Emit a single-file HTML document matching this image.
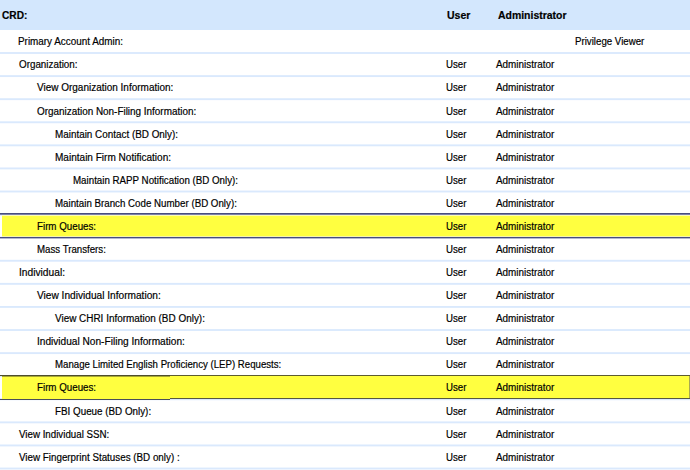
<!DOCTYPE html>
<html><head><meta charset="utf-8"><title>CRD Privileges</title>
<style>
html,body{margin:0;padding:0;background:#fff;}
body{width:690px;height:470px;position:relative;overflow:hidden;font-family:"Liberation Sans",sans-serif;font-size:10px;color:#000;}
.hd{position:absolute;left:0;top:0;width:690px;height:30px;background:#d3e7fd;}
.t{position:absolute;white-space:nowrap;line-height:12px;height:12px;transform-origin:0 0;-webkit-text-stroke:0.18px #000;}
.b{font-weight:bold;font-size:10.5px;}
.sep{position:absolute;left:0;width:690px;height:1px;}
.hl{position:absolute;left:0;width:690px;}
</style></head><body>
<div class="hd"></div>

<span class="t b" id="h0" style="left:1.81px;top:9px;transform:scaleX(0.9659)">CRD:</span>
<span class="t b" id="h1" style="left:446.60px;top:9px;transform:scaleX(1.0022)">User</span>
<span class="t b" id="h2" style="left:497.90px;top:9px;transform:scaleX(0.9949)">Administrator</span>
<div class="sep" style="top:52px;background:rgb(220,234,253)"></div>
<div class="sep" style="top:53px;background:rgb(220,234,253)"></div>
<div class="sep" style="top:75px;background:rgb(223,236,253)"></div>
<div class="sep" style="top:76px;background:rgb(218,233,253)"></div>
<div class="sep" style="top:77px;background:rgb(254,254,255)"></div>
<div class="sep" style="top:98px;background:rgb(226,238,253)"></div>
<div class="sep" style="top:99px;background:rgb(218,233,253)"></div>
<div class="sep" style="top:100px;background:rgb(251,252,255)"></div>
<div class="sep" style="top:121px;background:rgb(229,240,254)"></div>
<div class="sep" style="top:122px;background:rgb(218,233,253)"></div>
<div class="sep" style="top:123px;background:rgb(247,250,255)"></div>
<div class="sep" style="top:144px;background:rgb(232,242,254)"></div>
<div class="sep" style="top:145px;background:rgb(218,233,253)"></div>
<div class="sep" style="top:146px;background:rgb(244,249,254)"></div>
<div class="sep" style="top:167px;background:rgb(236,243,254)"></div>
<div class="sep" style="top:168px;background:rgb(218,233,253)"></div>
<div class="sep" style="top:169px;background:rgb(241,247,254)"></div>
<div class="sep" style="top:190px;background:rgb(239,245,254)"></div>
<div class="sep" style="top:191px;background:rgb(218,233,253)"></div>
<div class="sep" style="top:192px;background:rgb(238,245,254)"></div>
<div class="sep" style="top:213px;background:rgb(242,247,254)"></div>
<div class="sep" style="top:214px;background:rgb(218,233,253)"></div>
<div class="sep" style="top:215px;background:rgb(235,243,254)"></div>
<div class="sep" style="top:236px;background:rgb(245,249,254)"></div>
<div class="sep" style="top:237px;background:rgb(218,233,253)"></div>
<div class="sep" style="top:238px;background:rgb(232,241,254)"></div>
<div class="sep" style="top:259px;background:rgb(248,251,255)"></div>
<div class="sep" style="top:260px;background:rgb(218,233,253)"></div>
<div class="sep" style="top:261px;background:rgb(229,239,254)"></div>
<div class="sep" style="top:282px;background:rgb(251,253,255)"></div>
<div class="sep" style="top:283px;background:rgb(218,233,253)"></div>
<div class="sep" style="top:284px;background:rgb(225,237,253)"></div>
<div class="sep" style="top:306px;background:rgb(218,233,253)"></div>
<div class="sep" style="top:307px;background:rgb(222,236,253)"></div>
<div class="sep" style="top:329px;background:rgb(221,235,253)"></div>
<div class="sep" style="top:330px;background:rgb(219,234,253)"></div>
<div class="sep" style="top:352px;background:rgb(224,236,253)"></div>
<div class="sep" style="top:353px;background:rgb(218,233,253)"></div>
<div class="sep" style="top:354px;background:rgb(253,254,255)"></div>
<div class="sep" style="top:375px;background:rgb(227,238,253)"></div>
<div class="sep" style="top:376px;background:rgb(218,233,253)"></div>
<div class="sep" style="top:377px;background:rgb(250,252,255)"></div>
<div class="sep" style="top:398px;background:rgb(230,240,254)"></div>
<div class="sep" style="top:399px;background:rgb(218,233,253)"></div>
<div class="sep" style="top:400px;background:rgb(247,250,255)"></div>
<div class="sep" style="top:421px;background:rgb(233,242,254)"></div>
<div class="sep" style="top:422px;background:rgb(218,233,253)"></div>
<div class="sep" style="top:423px;background:rgb(244,248,254)"></div>
<div class="sep" style="top:444px;background:rgb(236,244,254)"></div>
<div class="sep" style="top:445px;background:rgb(218,233,253)"></div>
<div class="sep" style="top:446px;background:rgb(240,246,254)"></div>
<div class="sep" style="top:467px;background:rgb(239,246,254)"></div>
<div class="sep" style="top:468px;background:rgb(218,233,253)"></div>
<div class="sep" style="top:469px;background:rgb(237,244,254)"></div>
<div class="hl" style="left:0px;top:212px;width:690px;height:3px;background:#fff"></div>
<div class="hl" style="left:0px;top:213px;width:690px;height:1px;background:#474d80"></div>
<div class="hl" style="left:0px;top:214px;width:690px;height:1px;background:#7c81a8"></div>
<div class="hl" style="left:2px;top:215px;width:688px;height:1px;background:#fcfcb4"></div>
<div class="hl" style="left:2px;top:216px;width:688px;height:20px;background:#ffff40"></div>
<div class="hl" style="left:2px;top:236px;width:688px;height:1px;background:#f6f6ac"></div>
<div class="hl" style="left:0px;top:237px;width:690px;height:1px;background:#474d80"></div>
<div class="hl" style="left:0px;top:238px;width:690px;height:1px;background:#b4b8d0"></div>
<div class="hl" style="left:0px;top:375px;width:170px;height:1px;background:#4e4e2c"></div>
<div class="hl" style="left:2px;top:376px;width:168px;height:1px;background:#a6a634"></div>
<div class="hl" style="left:2px;top:377px;width:168px;height:22px;background:#ffff40"></div>
<div class="hl" style="left:0px;top:399px;width:170px;height:1px;background:#4a4e58"></div>
<div class="hl" style="left:170px;top:375px;width:520px;height:1px;background:#5c5c30"></div>
<div class="hl" style="left:170px;top:376px;width:519px;height:22px;background:#ffff40"></div>
<div class="hl" style="left:170px;top:398px;width:520px;height:1px;background:#565840"></div>
<div class="hl" style="left:689px;top:376px;width:1px;height:22px;background:#a8a850"></div>
<span class="t " id="r0l" style="left:18.41px;top:36px;transform:scaleX(0.9890)">Primary Account Admin:</span>
<span class="t " id="r0x" style="left:575.02px;top:36px;transform:scaleX(0.9695)">Privilege Viewer</span>
<span class="t " id="r1l" style="left:18.71px;top:59px;transform:scaleX(0.9836)">Organization:</span>
<span class="t " id="r1u" style="left:445.92px;top:59px;transform:scaleX(0.9680)">User</span>
<span class="t " id="r1a" style="left:496.10px;top:59px;transform:scaleX(0.9889)">Administrator</span>
<span class="t " id="r2l" style="left:37.10px;top:82px;transform:scaleX(0.9982)">View Organization Information:</span>
<span class="t " id="r2u" style="left:445.92px;top:82px;transform:scaleX(0.9680)">User</span>
<span class="t " id="r2a" style="left:496.10px;top:82px;transform:scaleX(0.9889)">Administrator</span>
<span class="t " id="r3l" style="left:36.90px;top:106px;transform:scaleX(0.9909)">Organization Non-Filing Information:</span>
<span class="t " id="r3u" style="left:445.92px;top:106px;transform:scaleX(0.9680)">User</span>
<span class="t " id="r3a" style="left:496.10px;top:106px;transform:scaleX(0.9889)">Administrator</span>
<span class="t " id="r4l" style="left:54.71px;top:129px;transform:scaleX(0.9882)">Maintain Contact (BD Only):</span>
<span class="t " id="r4u" style="left:445.92px;top:129px;transform:scaleX(0.9680)">User</span>
<span class="t " id="r4a" style="left:496.10px;top:129px;transform:scaleX(0.9889)">Administrator</span>
<span class="t " id="r5l" style="left:54.70px;top:152px;transform:scaleX(1.0040)">Maintain Firm Notification:</span>
<span class="t " id="r5u" style="left:445.92px;top:152px;transform:scaleX(0.9680)">User</span>
<span class="t " id="r5a" style="left:496.10px;top:152px;transform:scaleX(0.9889)">Administrator</span>
<span class="t " id="r6l" style="left:72.52px;top:175px;transform:scaleX(0.9747)">Maintain RAPP Notification (BD Only):</span>
<span class="t " id="r6u" style="left:445.92px;top:175px;transform:scaleX(0.9680)">User</span>
<span class="t " id="r6a" style="left:496.10px;top:175px;transform:scaleX(0.9889)">Administrator</span>
<span class="t " id="r7l" style="left:54.72px;top:198px;transform:scaleX(0.9738)">Maintain Branch Code Number (BD Only):</span>
<span class="t " id="r7u" style="left:445.92px;top:198px;transform:scaleX(0.9680)">User</span>
<span class="t " id="r7a" style="left:496.10px;top:198px;transform:scaleX(0.9889)">Administrator</span>
<span class="t " id="r8l" style="left:36.62px;top:221px;transform:scaleX(0.9754)">Firm Queues:</span>
<span class="t " id="r8u" style="left:445.92px;top:221px;transform:scaleX(0.9680)">User</span>
<span class="t " id="r8a" style="left:496.10px;top:221px;transform:scaleX(0.9889)">Administrator</span>
<span class="t " id="r9l" style="left:36.83px;top:244px;transform:scaleX(0.9676)">Mass Transfers:</span>
<span class="t " id="r9u" style="left:445.92px;top:244px;transform:scaleX(0.9680)">User</span>
<span class="t " id="r9a" style="left:496.10px;top:244px;transform:scaleX(0.9889)">Administrator</span>
<span class="t " id="r10l" style="left:18.68px;top:267px;transform:scaleX(1.0219)">Individual:</span>
<span class="t " id="r10u" style="left:445.92px;top:267px;transform:scaleX(0.9680)">User</span>
<span class="t " id="r10a" style="left:496.10px;top:267px;transform:scaleX(0.9889)">Administrator</span>
<span class="t " id="r11l" style="left:37.10px;top:290px;transform:scaleX(1.0136)">View Individual Information:</span>
<span class="t " id="r11u" style="left:445.92px;top:290px;transform:scaleX(0.9680)">User</span>
<span class="t " id="r11a" style="left:496.10px;top:290px;transform:scaleX(0.9889)">Administrator</span>
<span class="t " id="r12l" style="left:55.30px;top:313px;transform:scaleX(0.9930)">View CHRI Information (BD Only):</span>
<span class="t " id="r12u" style="left:445.92px;top:313px;transform:scaleX(0.9680)">User</span>
<span class="t " id="r12a" style="left:496.10px;top:313px;transform:scaleX(0.9889)">Administrator</span>
<span class="t " id="r13l" style="left:36.69px;top:336px;transform:scaleX(1.0114)">Individual Non-Filing Information:</span>
<span class="t " id="r13u" style="left:445.92px;top:336px;transform:scaleX(0.9680)">User</span>
<span class="t " id="r13a" style="left:496.10px;top:336px;transform:scaleX(0.9889)">Administrator</span>
<span class="t " id="r14l" style="left:54.73px;top:359px;transform:scaleX(0.9646)">Manage Limited English Proficiency (LEP) Requests:</span>
<span class="t " id="r14u" style="left:445.92px;top:359px;transform:scaleX(0.9680)">User</span>
<span class="t " id="r14a" style="left:496.10px;top:359px;transform:scaleX(0.9889)">Administrator</span>
<span class="t " id="r15l" style="left:36.62px;top:382px;transform:scaleX(0.9754)">Firm Queues:</span>
<span class="t " id="r15u" style="left:445.92px;top:382px;transform:scaleX(0.9680)">User</span>
<span class="t " id="r15a" style="left:496.10px;top:382px;transform:scaleX(0.9889)">Administrator</span>
<span class="t " id="r16l" style="left:54.71px;top:406px;transform:scaleX(0.9828)">FBI Queue (BD Only):</span>
<span class="t " id="r16u" style="left:445.92px;top:406px;transform:scaleX(0.9680)">User</span>
<span class="t " id="r16a" style="left:496.10px;top:406px;transform:scaleX(0.9889)">Administrator</span>
<span class="t " id="r17l" style="left:19.10px;top:429px;transform:scaleX(0.9744)">View Individual SSN:</span>
<span class="t " id="r17u" style="left:445.92px;top:429px;transform:scaleX(0.9680)">User</span>
<span class="t " id="r17a" style="left:496.10px;top:429px;transform:scaleX(0.9889)">Administrator</span>
<span class="t " id="r18l" style="left:19.10px;top:452px;transform:scaleX(0.9807)">View Fingerprint Statuses (BD only) :</span>
<span class="t " id="r18u" style="left:445.92px;top:452px;transform:scaleX(0.9680)">User</span>
<span class="t " id="r18a" style="left:496.10px;top:452px;transform:scaleX(0.9889)">Administrator</span>
</body></html>
